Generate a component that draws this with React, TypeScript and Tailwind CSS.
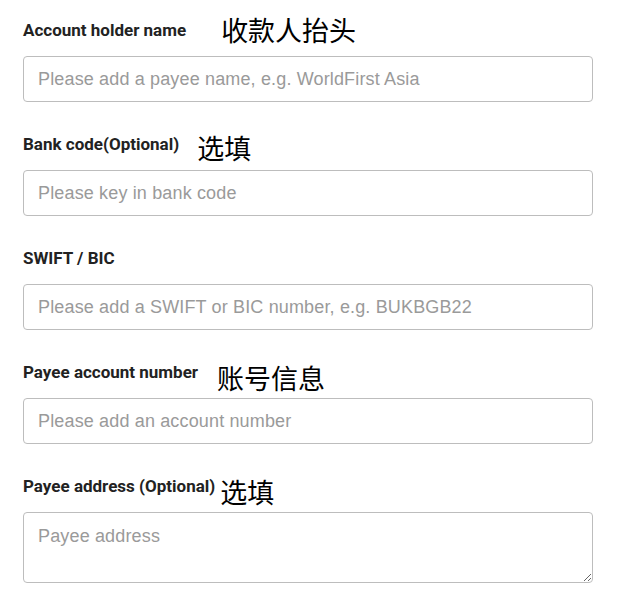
import React from "react";

type Field = {
  label: string;
  note?: string;
  noteGap: string;
  placeholder: string;
  multiline?: boolean;
};

const fields: Field[] = [
  { label: "Account holder name", note: "收款人抬头", noteGap: "ml-[35px] -translate-y-[2px]", placeholder: "Please add a payee name, e.g. WorldFirst Asia" },
  { label: "Bank code(Optional)", note: "选填", noteGap: "ml-[18px] translate-y-[2px]", placeholder: "Please key in bank code" },
  { label: "SWIFT / BIC", noteGap: "", placeholder: "Please add a SWIFT or BIC number, e.g. BUKBGB22" },
  { label: "Payee account number", note: "账号信息", noteGap: "ml-[19px] translate-y-[4px]", placeholder: "Please add an account number" },
  { label: "Payee address (Optional)", note: "选填", noteGap: "ml-[5px] translate-y-[4px]", placeholder: "Payee address", multiline: true },
];

export default function App() {
  return (
    <div className="w-[624px] h-[602px] bg-white pt-[11px] pl-[23px] pr-[31px]">
      {fields.map((f) => (
        <div key={f.label} className="mb-[23px]">
          <div className="h-[40px] flex items-center">
            <span className="text-[17px] font-bold text-[#222] font-['Roboto',sans-serif]">
              {f.label}
            </span>
            {f.note && (
              <span className={`${f.noteGap} text-[27px] leading-none text-black font-['Noto_Sans_CJK_SC',sans-serif]`}>
                {f.note}
              </span>
            )}
          </div>
          {f.multiline ? (
            <textarea
              placeholder={f.placeholder}
              className="mt-[5px] block w-full h-[71px] rounded-[4px] border border-[#bdbdbd] px-[14px] py-[10px] text-[18px] tracking-[0.15px] font-['Liberation_Sans',sans-serif] placeholder:text-[#9a9a9a] outline-none"
            />
          ) : (
            <input
              placeholder={f.placeholder}
              className="mt-[5px] block w-full h-[46px] rounded-[4px] border border-[#bdbdbd] px-[14px] text-[18px] tracking-[0.15px] font-['Liberation_Sans',sans-serif] placeholder:text-[#9a9a9a] outline-none"
            />
          )}
        </div>
      ))}
    </div>
  );
}
